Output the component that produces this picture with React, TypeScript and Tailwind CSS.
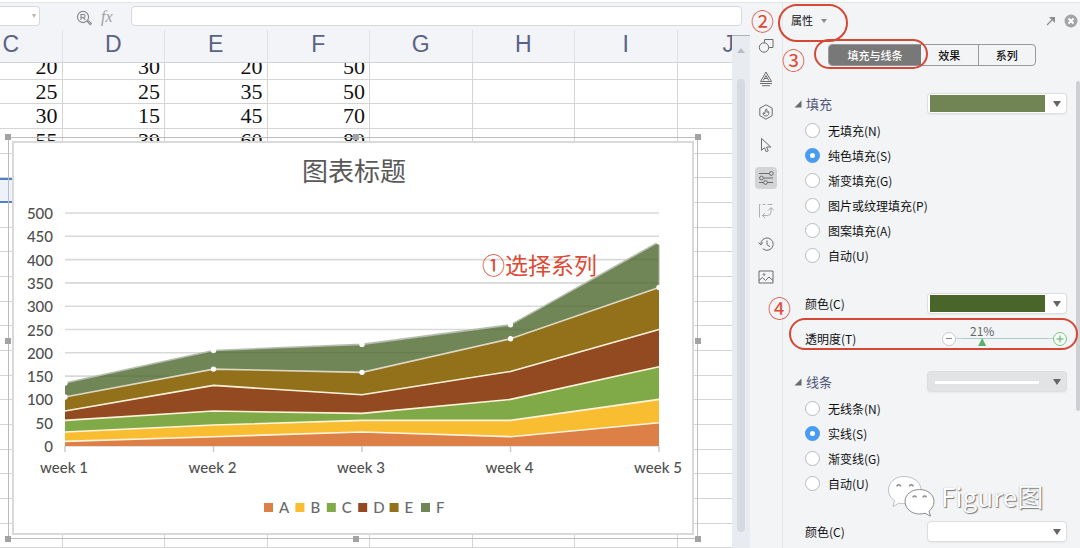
import React, { useState } from "react";

const columns = ["C", "D", "E", "F", "G", "H", "I", "J"];

const sheetRows: (number | null)[][] = [
  [20, 30, 20, 50],
  [25, 25, 35, 50],
  [30, 15, 45, 70],
  [55, 39, 60, 80],
  ...Array.from({ length: 16 }, () => []),
];

const SELECTED_ROW = 5;

const weeks = ["week 1", "week 2", "week 3", "week 4", "week 5"];

// Running totals, one entry for each week
const series = [
  { name: "A", color: "#dd8047", totals: [10, 20, 30, 20, 50] },
  { name: "B", color: "#f9bd32", totals: [30, 45, 55, 55, 100] },
  { name: "C", color: "#80a948", totals: [55, 75, 70, 100, 170] },
  { name: "D", color: "#934a20", totals: [75, 130, 110, 160, 250] },
  { name: "E", color: "#93701a", totals: [105, 165, 158, 230, 340] },
  { name: "F", color: "#4a6528", totals: [135, 205, 218, 260, 438] },
];

const xAt = (i: number) => 52 + i * 148.5;
const yAt = (v: number) => 304 - v * 0.466;

const AreaChart: React.FC = () => (
  <svg
    width="680"
    height="392"
    viewBox="0 0 680 392"
    className="block font-['Lato',sans-serif] font-medium"
    fontSize="15"
    fill="#505050"
  >
    <text x="341" y="39" textAnchor="middle" fontSize="26" fontWeight="400" fill="#595959" fontFamily="'Noto Sans CJK SC', sans-serif">
      图表标题
    </text>
    {Array.from({ length: 11 }, (_, i) => i * 50).map((v) => (
      <g key={v}>
        <line x1="52" x2="646" y1={yAt(v)} y2={yAt(v)} stroke="#d9d9d9" strokeWidth="1.6" />
        <text x="40" y={yAt(v) + 6} textAnchor="end">{v}</text>
      </g>
    ))}
    {series.map((s, n) => {
      const base = n === 0 ? [0, 0, 0, 0, 0] : series[n - 1].totals;
      const top = s.totals.map((v, i) => `${xAt(i)},${yAt(v)}`);
      const bottom = base.map((v, i) => `${xAt(i)},${yAt(v)}`).reverse();
      return (
        <polygon key={s.name} points={[...top, ...bottom].join(" ")} fill={s.color} fillOpacity={s.name === "F" ? 0.79 : 1} />
      );
    })}
    {series.map((s) => (
      <polyline
        key={s.name}
        points={s.totals.map((v, i) => `${xAt(i)},${yAt(v)}`).join(" ")}
        fill="none"
        stroke={s.name === "F" ? "#b4bcaf" : s.name === "E" ? "#dcd8c4" : "#fff3dc"}
        strokeWidth="1.6"
      />
    ))}
    <line x1="646" x2="646" y1={yAt(438)} y2={yAt(340)} stroke="#a3ac9c" />
    {/* Selected series points */}
    {series.slice(4).map((s) =>
      s.totals.map((v, i) => <circle key={`${s.name}${i}`} cx={xAt(i)} cy={yAt(v)} r="2.7" fill="#fff" />)
    )}
    {weeks.map((w, i) => (
      <g key={w}>
        <line x1={xAt(i)} x2={xAt(i)} y1="304" y2="310" stroke="#c8c8c8" strokeWidth="1.4" />
        <text x={xAt(i) - 1} y="331" textAnchor="middle">{w}</text>
      </g>
    ))}
    {series.map((s, i) => (
      <g key={s.name}>
        <rect x={251 + i * 31.4} y="361" width="9" height="9" fill={s.color} fillOpacity={s.name === "F" ? 0.79 : 1} />
        <text x={266 + i * 31.4} y="371" fill="#6a6a6a">{s.name}</text>
      </g>
    ))}
    <text x="469" y="132" fontSize="23" fontWeight="400" fill="#dc4a36" fontFamily="'Noto Sans CJK SC', sans-serif">
      ①选择系列
    </text>
  </svg>
);

const handles = [
  "-left-1 -top-1",
  "left-1/2 -top-1",
  "-right-1 -top-1",
  "-left-1 top-1/2",
  "-right-1 top-1/2",
  "-left-1 -bottom-1",
  "left-1/2 -bottom-1",
  "-right-1 -bottom-1",
];

const SheetArea: React.FC = () => (
  <div className="relative flex min-w-0 flex-1 flex-col overflow-hidden">
    <div className="h-[33px] shrink-0 border-b border-[#cfd2d6] bg-[#f2f4f7]">
      <div className="-ml-10 grid h-full w-[calc(100%+88px)] grid-cols-8">
        {columns.map((c) => (
          <div key={c} className="border-r border-[#dfe2e6] text-center text-[23px] leading-7 text-[#5a6284]">
            {c}
          </div>
        ))}
      </div>
    </div>
    <div className="min-h-0 flex-1 overflow-hidden">
      <table className="-mt-2 -ml-10 w-[calc(100%+88px)] table-fixed border-separate border-spacing-0 font-['Liberation_Serif',serif] text-[22px] leading-5 text-[#111]">
        <tbody>
          {sheetRows.map((row, r) => (
            <tr key={r} className="h-[25px] nth-[3n+2]:h-6">
              {columns.map((c, i) => (
                <td
                  key={c}
                  className={
                    r === SELECTED_ROW && i === 0
                      ? "border-y-2 border-[#5080c4] bg-[#eef0fa] p-0"
                      : "border-r border-b border-[#d4d4d4] bg-white p-0 pr-1 text-right"
                  }
                >
                  {row[i]}
                </td>
              ))}
            </tr>
          ))}
        </tbody>
      </table>
    </div>
    {/* Chart object on the sheet */}
    <div className="absolute top-[107px] left-2 border border-[#bcbcbc] p-[3px]">
      <div className="border-2 border-[#d9d9d9] bg-white">
        <div className="-m-[1px]">
          <AreaChart />
        </div>
      </div>
      {handles.map((h) => (
        <span key={h} className={`absolute size-[6px] bg-[#a3a3a6] ${h}`} />
      ))}
    </div>
  </div>
);

const FormulaBar: React.FC = () => (
  <div className="flex h-[27px] shrink-0 items-start bg-[#f2f4f7] pt-[3px] pr-2">
    <div className="relative w-10">
      <input aria-label="名称框" className="block h-5 w-full rounded-r border border-l-0 border-[#d6d8da] bg-white" />
      <span className="absolute top-2 right-[4px] border-x-2 border-t-4 border-x-transparent border-t-[#b5b5b5]" />
    </div>
    <svg viewBox="0 0 16 16" className="mt-1 ml-9 size-4" fill="none" stroke="#868686" strokeWidth="1.1">
      <circle cx="7" cy="7" r="5.6" />
      <path d="M5 10V4.500h2.600a1.500 1.500 0 0 1 0 3H5M7.300 7.600l2 2.200M11 11.200l3.200 3.400 1.200-1.200-3.400-3.100" />
    </svg>
    <span className="mt-[1px] ml-[9px] w-[22px] font-['Liberation_Serif',serif] text-base leading-5 text-[#a0a0a0] italic">fx</span>
    <input aria-label="编辑栏" className="ml-2 h-5 min-w-0 flex-1 rounded border border-[#d6d8da] bg-white" />
  </div>
);

const sideIcons: { label: string; icon: React.ReactNode; active?: boolean }[] = [
  {
    label: "形状",
    icon: (
      <>
        <path d="M6.500 4.500V1.500h8.500v8h-4" />
        <circle cx="6" cy="9.500" r="4.700" />
      </>
    ),
  },
  { label: "艺术字", icon: <path d="M8 1 2.500 10.500h11zM8 4.500l-2.800 5M8 4.500l2.800 5M6.500 7.500h3M2 12.500h12M4 14.700h8" /> },
  {
    label: "推荐",
    icon: (
      <path d="M8 .8 14.200 4.200v7.400L8 15.200 1.800 11.600V4.200zM8 12c-2 0-3.300-1.400-2.800-3.200.9.100 1.500.6 1.700 1.200C6.600 8 7.400 6 8.600 4.800c.1 1.500.6 2.500.5 3.700.4-.5.800-.8 1.500-.9C11.400 10 10 12 8 12z" />
    ),
  },
  { label: "选择", icon: <path d="M3.500 1.500v11.800l3-2.600 1.700 4 2-.9-1.600-3.800h4.200z" /> },
  {
    label: "属性",
    active: true,
    icon: (
      <>
        <path d="M1 3.500h10.500M1 8h.5M5.500 8H15M1 12.500h4.500M9.500 12.500H15" />
        <circle cx="13.300" cy="3.500" r="1.900" />
        <circle cx="3.500" cy="8" r="1.900" />
        <circle cx="7.500" cy="12.500" r="1.900" />
      </>
    ),
  },
  {
    label: "转换",
    icon: (
      <path d="M1.500 1.500v13M1.500 1.500h1M4.500 1.500h3M9.500 1.500h5M4.500 12.500h5a3.500 3.500 0 0 0 3.500-3.500V5M10 7.500 13 4.500l3 3M7 10l-2.500 2.500L7 15" opacity=".5" />
    ),
  },
  { label: "历史", icon: <path d="M2.800 8.500a6.200 6.200 0 1 1 2 4.200M.5 6.500l2.300 2.300L5.200 6.500M9 4.500v4.200l3 2" /> },
  {
    label: "图片",
    icon: (
      <>
        <path d="M1 2h14v12H1zM1 11.500l3.500-3 3 3 3.500-3.500 4 3.500" />
        <circle cx="6" cy="5.500" r=".8" />
      </>
    ),
  },
];

const Caret: React.FC = () => (
  <span className="pointer-events-none absolute top-2 right-[6px] border-x-4 border-t-[6px] border-x-transparent border-t-[#666]" />
);

const Picker: React.FC<{ id: string; label: string; variant: "light" | "dark" | "line" | "empty" }> = ({ id, label, variant }) => (
  <div className="relative h-[21px] w-[140px]">
    <select
      id={id}
      aria-label={label}
      className={`block size-full appearance-none rounded border border-[#dcdedf] shadow-xs ${variant === "line" ? "bg-[#e2e3e4]" : "bg-white"}`}
    />
    {variant === "light" && <span className="pointer-events-none absolute inset-y-[2px] right-[22px] left-[3px] bg-[#718453]" />}
    {variant === "dark" && <span className="pointer-events-none absolute inset-y-[2px] right-[22px] left-[3px] bg-[#4a652a]" />}
    {variant === "line" && <span className="pointer-events-none absolute top-[10px] right-7 left-2 h-[3px] bg-white" />}
    <Caret />
  </div>
);

const RadioList: React.FC<{ name: string; options: string[]; initial: string }> = ({ name, options, initial }) => {
  const [value, setValue] = useState(initial);
  return (
    <div className="mt-1 ml-[22px]">
      {options.map((option) => (
        <label key={option} className="flex h-[25px] items-center gap-2 leading-4">
          <input
            type="radio"
            name={name}
            checked={value === option}
            onChange={() => setValue(option)}
            className="size-[15px] shrink-0 appearance-none rounded-full border border-[#b9bbbe] bg-white checked:border-[5px] checked:border-[#4a9cf2]"
          />
          {option}
        </label>
      ))}
    </div>
  );
};

const SectionTitle: React.FC<{ children: React.ReactNode }> = ({ children }) => (
  <h2 className="flex items-center gap-1 pl-[11px] text-[13px] leading-4 text-[#50557a]">
    <svg viewBox="0 0 8 8" className="size-2" fill="#6b6b6b">
      <path d="M7.500.5v7H.5z" />
    </svg>
    {children}
  </h2>
);

const PropertiesPanel: React.FC = () => {
  const [opacity, setOpacity] = useState(21);
  return (
    <section className="relative w-[298px] shrink-0 overflow-hidden border-l border-[#e4e6ea] text-xs text-[#111]">
      <header className="flex h-[35px] items-center pr-[2px] pl-2">
        <button className="flex items-center gap-2 text-[11px]">
          属性
          <span className="border-x-[3px] border-t-[4px] border-x-transparent border-t-[#8a8a8a]" />
        </button>
        <button aria-label="弹出" className="ml-auto">
          <svg viewBox="0 0 10 10" className="size-[10px]" fill="#8d8d8d" stroke="#8d8d8d" strokeWidth="1.200">
            <path d="M1 9l6-6" />
            <path d="M3 1h6v6z" stroke="none" />
          </svg>
        </button>
        <button aria-label="关闭" className="ml-2">
          <svg viewBox="0 0 14 14" className="size-[14px]">
            <circle cx="7" cy="7" r="6.500" fill="#a2a4a6" />
            <path d="M4.500 4.500l5 5M9.500 4.500l-5 5" stroke="#fff" strokeWidth="2" />
          </svg>
        </button>
      </header>

      <div className="mt-[6px] ml-[45px] flex h-[22px] w-[208px] overflow-hidden rounded border border-[#999] text-[11px] font-medium">
        <button className="w-[92px] bg-[#787878] text-white">填充与线条</button>
        <button className="flex-1 border-r border-[#999]">效果</button>
        <button className="flex-1">系列</button>
      </div>

      <div className="mt-[27px] flex items-center justify-between pr-[13px]">
        <SectionTitle>填充</SectionTitle>
        <Picker id="fill" label="填充" variant="light" />
      </div>
      <RadioList
        name="fill-type"
        initial="纯色填充(S)"
        options={["无填充(N)", "纯色填充(S)", "渐变填充(G)", "图片或纹理填充(P)", "图案填充(A)", "自动(U)"]}
      />

      <div className="mt-[25px] flex items-center justify-between pr-[13px] pl-[22px]">
        <label htmlFor="fill-color">颜色(C)</label>
        <Picker id="fill-color" label="颜色(C)" variant="dark" />
      </div>

      <div className="mt-[14px] flex h-[21px] items-center justify-between pr-[13px] pl-[22px]">
        <label htmlFor="opacity">透明度(T)</label>
        <div className="relative flex items-center">
          <button
            aria-label="减少"
            onClick={() => setOpacity(opacity - 1)}
            className="flex size-[14px] items-center justify-center rounded-full border border-[#c9cbce] bg-white"
          >
            <span className="h-px w-[6px] bg-[#888]" />
          </button>
          <span className="h-px w-[6px] bg-[#bcd0d4]" />
          <input
            id="opacity"
            type="range"
            value={opacity}
            onChange={(e) => setOpacity(Number(e.target.value))}
            className="h-5 w-[85px] appearance-none bg-transparent [&::-webkit-slider-runnable-track]:h-px [&::-webkit-slider-runnable-track]:bg-[#a9ccc8] [&::-webkit-slider-thumb]:size-2 [&::-webkit-slider-thumb]:appearance-none [&::-webkit-slider-thumb]:bg-[#5bb06d] [&::-webkit-slider-thumb]:[clip-path:polygon(50%_0,100%_100%,0_100%)]"
          />
          <span className="h-px w-[6px] bg-[#bcd0d4]" />
          <button
            aria-label="增加"
            onClick={() => setOpacity(opacity + 1)}
            className="flex size-[14px] items-center justify-center rounded-full border border-[#7cc48a] bg-[#f4fbf5]"
          >
            <svg viewBox="0 0 8 8" className="size-2" stroke="#5bb06d">
              <path d="M4 .5v7M.5 4h7" />
            </svg>
          </button>
          <output htmlFor="opacity" className="absolute -top-1 left-7 leading-3 text-[#666]">
            {opacity}%
          </output>
        </div>
      </div>

      <div className="mt-[22px] flex items-center justify-between pr-[13px]">
        <SectionTitle>线条</SectionTitle>
        <Picker id="line" label="线条" variant="line" />
      </div>
      <RadioList name="line-type" initial="实线(S)" options={["无线条(N)", "实线(S)", "渐变线(G)", "自动(U)"]} />

      <div className="mt-[25px] flex items-center justify-between pr-[13px] pl-[22px]">
        <label htmlFor="line-color">颜色(C)</label>
        <Picker id="line-color" label="颜色(C)" variant="empty" />
      </div>

      <div className="absolute top-[78px] right-0 h-[330px] w-1 rounded-full bg-[#cfd0d3]" />

      {/* Watermark */}
      <div className="absolute top-[472px] left-[104px] flex items-center gap-[6px]">
        <svg viewBox="0 0 48 42" className="h-[42px] w-12" fill="#fff" stroke="#8a8a8a" strokeWidth="1">
          <path
            d="M17 1.500C8 1.500 1.500 7.500 1.500 15c0 4.500 2.300 8 6 10.500L6 31.500l6-3.500c2 .5 4 .7 6 .6 6-1 16-6 16-15C33 6.500 25.500 1.500 17 1.500z"
            strokeOpacity=".5"
          />
          <path d="M32.500 14.500c-8.500 0-14.500 5.500-14.500 12s6 12.500 14.500 12.500c2 0 3.800-.3 5.500-.8l5.500 3-1.500-5c3-2.500 5-5.500 5-9.700 0-6.500-6-12-14.500-12z" />
          <path
            d="M10 11.500a1.800 1.800 0 0 1 3.600 0M22.500 11.500a1.800 1.800 0 0 1 3.600 0M26 22.500a1.600 1.600 0 0 1 3.200 0M36 22.500a1.600 1.600 0 0 1 3.200 0"
            fill="none"
            strokeWidth="1.500"
          />
        </svg>
        <span className="text-[26px] leading-8 text-white [text-shadow:1px_1px_1px_#777,0_0_1px_#999]">Figure图</span>
      </div>
    </section>
  );
};

const Marker: React.FC<{ className: string; children: React.ReactNode }> = ({ className, children }) => (
  <span className={`absolute text-[23px] leading-6 text-[#dc4a36] ${className}`}>{children}</span>
);

const App: React.FC = () => (
  <main className="flex h-screen flex-col overflow-hidden bg-[#f2f4f6] font-['Liberation_Sans','Noto_Sans_CJK_SC',sans-serif]">
    <div className="h-[2px] shrink-0 bg-white" />
    <div className="flex min-h-0 flex-1 border-t border-[#e4e5e7]">
      <div className="flex min-w-0 flex-1 flex-col">
        <FormulaBar />
        <div className="flex min-h-0 flex-1">
          <SheetArea />
          <div className="mt-[5px] flex w-[18px] shrink-0 flex-col items-center border-t border-[#a9afbd] bg-[#e8ebf0] pb-4">
            <span className="mt-3 border-x-4 border-b-[5px] border-x-transparent border-b-[#b8bec9]" />
            <span className="mt-[26px] w-2 flex-1 rounded-full bg-[#d5dae3]" />
          </div>
        </div>
      </div>

      <div className="relative flex shrink-0 font-['Noto_Sans_CJK_SC',sans-serif]">
        <nav className="flex w-8 flex-col items-center gap-[11px] pt-8">
          {sideIcons.map(({ label, icon, active }) => (
            <button
              key={label}
              aria-label={label}
              className={`flex size-[22px] items-center justify-center rounded-sm text-[#6c6c6c] ${active ? "bg-[#d3d4d6]" : ""}`}
            >
              <svg width="16" height="16" viewBox="0 0 16 16" fill="none" stroke="currentColor" strokeWidth="1">
                {icon}
              </svg>
            </button>
          ))}
        </nav>
        <PropertiesPanel />

        {/* Step marks */}
        <Marker className="top-[5px] left-[1px]">②</Marker>
        <Marker className="top-11 left-8">③</Marker>
        <Marker className="top-[292px] left-[18px]">④</Marker>
        <span className="pointer-events-none absolute top-[1px] left-7 h-[38px] w-[70px] rounded-[19px] border-2 border-[#d64836]" />
        <span className="pointer-events-none absolute top-9 left-16 h-[30px] w-[114px] rounded-[15px] border-2 border-[#d64836]" />
        <span className="pointer-events-none absolute top-[315px] left-[39px] h-8 w-[289px] rounded-2xl border-2 border-[#d64836]" />
      </div>
    </div>
  </main>
);

export default App;
